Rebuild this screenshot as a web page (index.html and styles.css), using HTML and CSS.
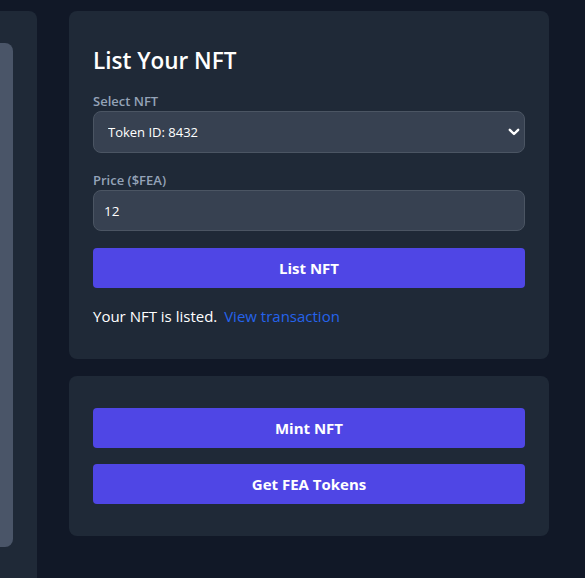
FILE: index.html
```html
<!DOCTYPE html>
<html lang="en">
<head>
<meta charset="utf-8">
<title>List Your NFT</title>
<link rel="stylesheet" href="styles.css">
</head>
<body>
<div class="layout">
  <aside class="side-card">
    <div class="side-inner"></div>
  </aside>
  <main class="column">
    <section class="card list-card">
      <h2 class="title">List Your NFT</h2>
      <label class="label" for="nft">Select NFT</label>
      <div class="select-wrap">
        <select id="nft" class="field select">
          <option>Token ID: 8432</option>
        </select>
        <svg class="chev" width="12" height="8" viewBox="0 0 12 8"><path d="M1.8 1.8 L6 6 L10.2 1.8" fill="none" stroke="#fff" stroke-width="2.4" stroke-linecap="round" stroke-linejoin="round"/></svg>
      </div>
      <label class="label" for="price">Price ($FEA)</label>
      <input id="price" class="field input" type="text" value="12">
      <button class="btn">List NFT</button>
      <p class="status">Your NFT is listed. <a class="link" href="#">View transaction</a></p>
    </section>
    <section class="card actions-card">
      <button class="btn">Mint NFT</button>
      <button class="btn">Get FEA Tokens</button>
    </section>
  </main>
</div>
</body>
</html>
```

FILE: styles.css
```css
* { box-sizing: border-box; }
html, body { margin: 0; padding: 0; }
body {
  background: #111827;
  color: #fff;
  font-family: "Open Sans", "Noto Sans", sans-serif;
  height: 578px;
  overflow: hidden;
}
.layout {
  display: flex;
  gap: 32px;
  padding-top: 11px;
  margin-left: -443px;
}
.side-card {
  width: 480px;
  height: 567px;
  flex: none;
  background: #1f2937;
  border-radius: 8px 8px 0 0;
  padding: 32px 24px 0 0;
}
.side-inner {
  height: 504px;
  background: #4a5568;
  border-radius: 8px;
}
.column {
  width: 480px;
  flex: none;
  display: flex;
  flex-direction: column;
  gap: 17px;
}
.card {
  background: #1f2937;
  border-radius: 8px;
  padding: 24px;
}
.list-card { padding-top: 25px; padding-bottom: 31px; }
.title {
  margin: 9px 0 14px;
  font-size: 22.5px;
  line-height: 32px;
  font-weight: 600;
}
.label {
  display: block;
  font-size: 13px;
  line-height: 20px;
  font-weight: 600;
  color: #94a3b8;
}
.select-wrap { position: relative; margin-bottom: 17px; }
.field {
  display: block;
  width: 100%;
  height: 42px;
  background: #374151;
  border: 1px solid #4b5563;
  border-radius: 8px;
  color: #fff;
  font-family: inherit;
  font-size: 13.5px;
  padding: 0 10px;
  outline: none;
}
.select {
  appearance: none;
  -webkit-appearance: none;
  font-size: 13px;
  padding-left: 14px;
}
.chev {
  position: absolute;
  right: 5px;
  top: 17px;
}
.input { height: 41px; margin-bottom: 17px; }
.btn {
  display: block;
  width: 100%;
  height: 40px;
  border: 0;
  border-radius: 4px;
  background: #4f46e5;
  color: #fff;
  font-family: inherit;
  font-size: 15px;
  font-weight: 700;
}
.status {
  margin: 16px 0 0;
  font-size: 15px;
  line-height: 24px;
}
.link {
  color: #2563eb;
  text-decoration: none;
  margin-left: 3px;
}
.actions-card {
  display: flex;
  flex-direction: column;
  gap: 16px;
  padding-top: 32px;
  padding-bottom: 32px;
}
```
